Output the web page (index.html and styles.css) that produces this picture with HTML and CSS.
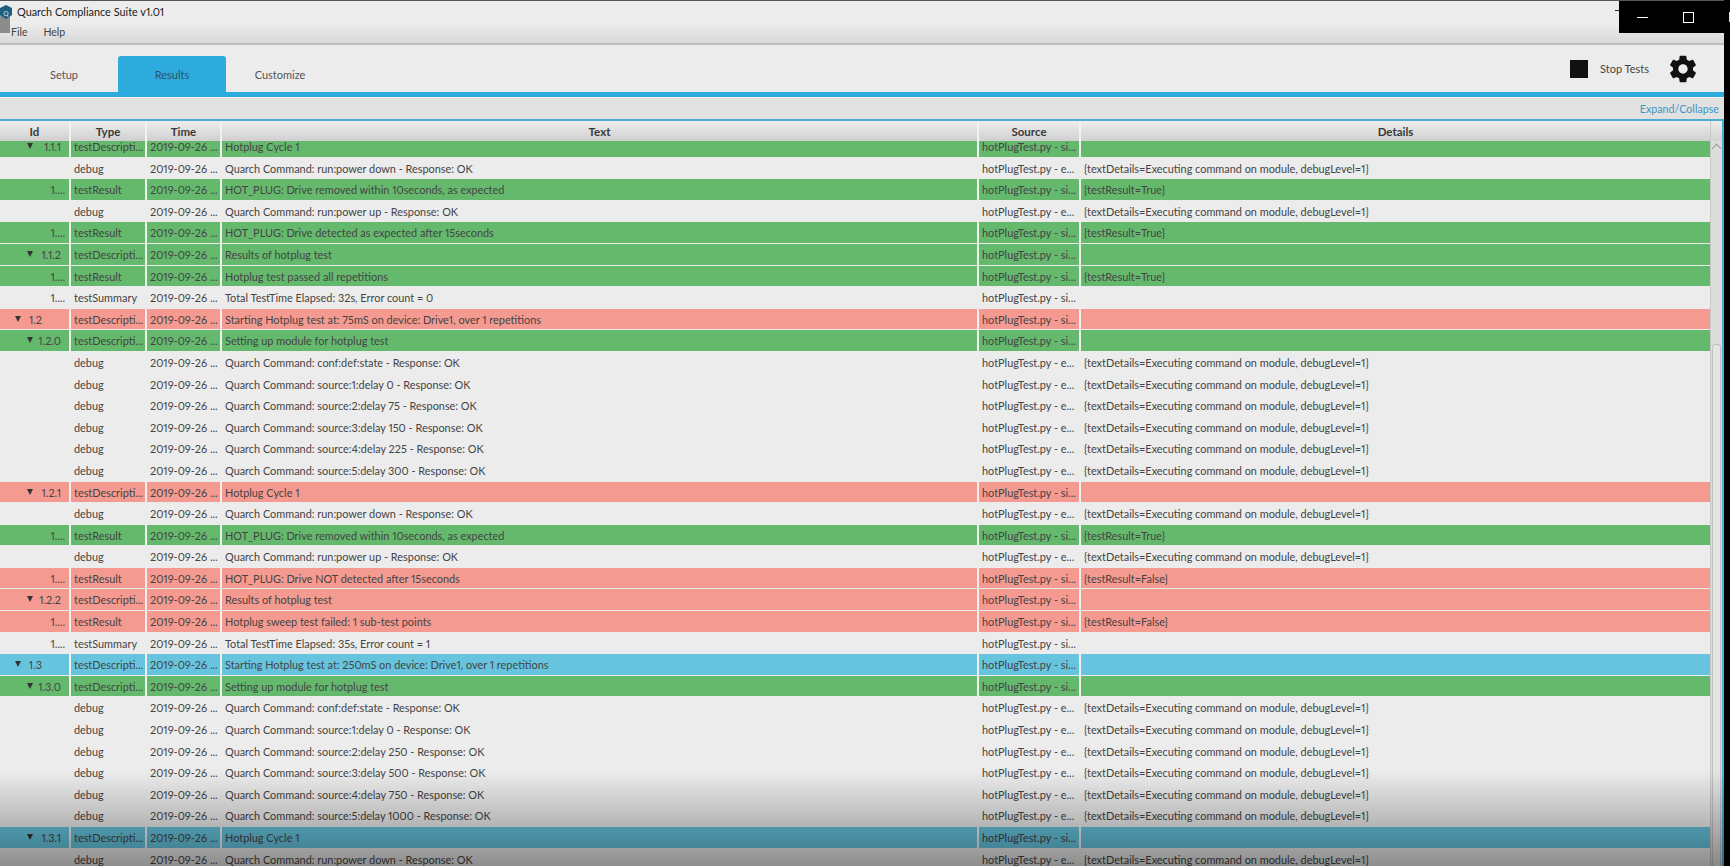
FILE: index.html
```html
<!DOCTYPE html>
<html lang="en">
<head>
<meta charset="utf-8">
<title>Quarch Compliance Suite v1.01</title>
<link rel="stylesheet" href="styles.css">
</head>
<body>
<div class="app">
  <div class="chrome">
    <div class="titlebar"><svg class="logo" viewBox="0 0 12 14"><path d="M6 0l6 3v7l-6 4-6-4V3z" fill="#1d5f80"/><text x="6" y="10.5" text-anchor="middle" class="logo-q">Q</text></svg><span>Quarch Compliance Suite v1.01</span></div>
    <div class="menubar"><span>File</span><span>Help</span></div>
  </div>
  <div class="toolbar">
    <div class="tabs">
      <div class="tab">Setup</div>
      <div class="tab active">Results</div>
      <div class="tab">Customize</div>
    </div>
    <div class="actions">
      <span class="stop-icon"></span>
      <span class="stop-label">Stop Tests</span>
      <svg class="gear" viewBox="0 0 24 24"><path fill="#111" d="M19.43 12.98c.04-.32.07-.64.07-.98s-.03-.66-.07-.98l2.11-1.65c.19-.15.24-.42.12-.64l-2-3.46c-.12-.22-.39-.3-.61-.22l-2.49 1c-.52-.4-1.08-.73-1.69-.98l-.38-2.65C14.46 2.18 14.25 2 14 2h-4c-.25 0-.46.18-.49.42l-.38 2.65c-.61.25-1.17.59-1.69.98l-2.49-1c-.23-.09-.49 0-.61.22l-2 3.46c-.13.22-.07.49.12.64l2.11 1.65c-.04.32-.07.65-.07.98s.03.66.07.98l-2.11 1.65c-.19.15-.24.42-.12.64l2 3.46c.12.22.39.3.61.22l2.49-1c.52.4 1.08.73 1.69.98l.38 2.65c.03.24.24.42.49.42h4c.25 0 .46-.18.49-.42l.38-2.65c.61-.25 1.17-.59 1.69-.98l2.49 1c.23.09.49 0 .61-.22l2-3.46c.12-.22.07-.49-.12-.64l-2.11-1.65zM12 15.5c-1.93 0-3.5-1.57-3.5-3.5s1.57-3.5 3.5-3.5 3.5 1.57 3.5 3.5-1.57 3.5-3.5 3.5z"/></svg>
    </div>
  </div>
  <div class="expandbar"><span>Expand/Collapse</span></div>
  <div class="grid">
    <div class="tablewrap">
      <div class="head">
        <div class="hc">Id</div><div class="hc">Type</div><div class="hc">Time</div><div class="hc">Text</div><div class="hc">Source</div><div class="hc">Details</div>
      </div>
      <div class="viewport">
        <table class="rows">
          <tbody>
<tr class="g"><td class="id l3"><i></i>1.1.1</td><td>testDescripti...</td><td>2019-09-26 ...</td><td>Hotplug Cycle 1</td><td>hotPlugTest.py - si...</td><td></td></tr>
<tr><td class="id"></td><td>debug</td><td>2019-09-26 ...</td><td>Quarch Command: run:power down - Response: OK</td><td>hotPlugTest.py - e...</td><td>{textDetails=Executing command on module, debugLevel=1}</td></tr>
<tr class="g"><td class="id">1....</td><td>testResult</td><td>2019-09-26 ...</td><td>HOT_PLUG: Drive removed within 10seconds, as expected</td><td>hotPlugTest.py - si...</td><td>{testResult=True}</td></tr>
<tr><td class="id"></td><td>debug</td><td>2019-09-26 ...</td><td>Quarch Command: run:power up - Response: OK</td><td>hotPlugTest.py - e...</td><td>{textDetails=Executing command on module, debugLevel=1}</td></tr>
<tr class="g"><td class="id">1....</td><td>testResult</td><td>2019-09-26 ...</td><td>HOT_PLUG: Drive detected as expected after 15seconds</td><td>hotPlugTest.py - si...</td><td>{testResult=True}</td></tr>
<tr class="g"><td class="id l3"><i></i>1.1.2</td><td>testDescripti...</td><td>2019-09-26 ...</td><td>Results of hotplug test</td><td>hotPlugTest.py - si...</td><td></td></tr>
<tr class="g"><td class="id">1....</td><td>testResult</td><td>2019-09-26 ...</td><td>Hotplug test passed all repetitions</td><td>hotPlugTest.py - si...</td><td>{testResult=True}</td></tr>
<tr><td class="id">1....</td><td>testSummary</td><td>2019-09-26 ...</td><td>Total TestTime Elapsed: 32s, Error count = 0</td><td>hotPlugTest.py - si...</td><td></td></tr>
<tr class="r"><td class="id l2"><i></i>1.2</td><td>testDescripti...</td><td>2019-09-26 ...</td><td>Starting Hotplug test at: 75mS on device: Drive1, over 1 repetitions</td><td>hotPlugTest.py - si...</td><td></td></tr>
<tr class="g"><td class="id l3"><i></i>1.2.0</td><td>testDescripti...</td><td>2019-09-26 ...</td><td>Setting up module for hotplug test</td><td>hotPlugTest.py - si...</td><td></td></tr>
<tr><td class="id"></td><td>debug</td><td>2019-09-26 ...</td><td>Quarch Command: conf:def:state - Response: OK</td><td>hotPlugTest.py - e...</td><td>{textDetails=Executing command on module, debugLevel=1}</td></tr>
<tr><td class="id"></td><td>debug</td><td>2019-09-26 ...</td><td>Quarch Command: source:1:delay 0 - Response: OK</td><td>hotPlugTest.py - e...</td><td>{textDetails=Executing command on module, debugLevel=1}</td></tr>
<tr><td class="id"></td><td>debug</td><td>2019-09-26 ...</td><td>Quarch Command: source:2:delay 75 - Response: OK</td><td>hotPlugTest.py - e...</td><td>{textDetails=Executing command on module, debugLevel=1}</td></tr>
<tr><td class="id"></td><td>debug</td><td>2019-09-26 ...</td><td>Quarch Command: source:3:delay 150 - Response: OK</td><td>hotPlugTest.py - e...</td><td>{textDetails=Executing command on module, debugLevel=1}</td></tr>
<tr><td class="id"></td><td>debug</td><td>2019-09-26 ...</td><td>Quarch Command: source:4:delay 225 - Response: OK</td><td>hotPlugTest.py - e...</td><td>{textDetails=Executing command on module, debugLevel=1}</td></tr>
<tr><td class="id"></td><td>debug</td><td>2019-09-26 ...</td><td>Quarch Command: source:5:delay 300 - Response: OK</td><td>hotPlugTest.py - e...</td><td>{textDetails=Executing command on module, debugLevel=1}</td></tr>
<tr class="r"><td class="id l3"><i></i>1.2.1</td><td>testDescripti...</td><td>2019-09-26 ...</td><td>Hotplug Cycle 1</td><td>hotPlugTest.py - si...</td><td></td></tr>
<tr><td class="id"></td><td>debug</td><td>2019-09-26 ...</td><td>Quarch Command: run:power down - Response: OK</td><td>hotPlugTest.py - e...</td><td>{textDetails=Executing command on module, debugLevel=1}</td></tr>
<tr class="g"><td class="id">1....</td><td>testResult</td><td>2019-09-26 ...</td><td>HOT_PLUG: Drive removed within 10seconds, as expected</td><td>hotPlugTest.py - si...</td><td>{testResult=True}</td></tr>
<tr><td class="id"></td><td>debug</td><td>2019-09-26 ...</td><td>Quarch Command: run:power up - Response: OK</td><td>hotPlugTest.py - e...</td><td>{textDetails=Executing command on module, debugLevel=1}</td></tr>
<tr class="r"><td class="id">1....</td><td>testResult</td><td>2019-09-26 ...</td><td>HOT_PLUG: Drive NOT detected after 15seconds</td><td>hotPlugTest.py - si...</td><td>{testResult=False}</td></tr>
<tr class="r"><td class="id l3"><i></i>1.2.2</td><td>testDescripti...</td><td>2019-09-26 ...</td><td>Results of hotplug test</td><td>hotPlugTest.py - si...</td><td></td></tr>
<tr class="r"><td class="id">1....</td><td>testResult</td><td>2019-09-26 ...</td><td>Hotplug sweep test failed: 1 sub-test points</td><td>hotPlugTest.py - si...</td><td>{testResult=False}</td></tr>
<tr><td class="id">1....</td><td>testSummary</td><td>2019-09-26 ...</td><td>Total TestTime Elapsed: 35s, Error count = 1</td><td>hotPlugTest.py - si...</td><td></td></tr>
<tr class="b"><td class="id l2"><i></i>1.3</td><td>testDescripti...</td><td>2019-09-26 ...</td><td>Starting Hotplug test at: 250mS on device: Drive1, over 1 repetitions</td><td>hotPlugTest.py - si...</td><td></td></tr>
<tr class="g"><td class="id l3"><i></i>1.3.0</td><td>testDescripti...</td><td>2019-09-26 ...</td><td>Setting up module for hotplug test</td><td>hotPlugTest.py - si...</td><td></td></tr>
<tr><td class="id"></td><td>debug</td><td>2019-09-26 ...</td><td>Quarch Command: conf:def:state - Response: OK</td><td>hotPlugTest.py - e...</td><td>{textDetails=Executing command on module, debugLevel=1}</td></tr>
<tr><td class="id"></td><td>debug</td><td>2019-09-26 ...</td><td>Quarch Command: source:1:delay 0 - Response: OK</td><td>hotPlugTest.py - e...</td><td>{textDetails=Executing command on module, debugLevel=1}</td></tr>
<tr><td class="id"></td><td>debug</td><td>2019-09-26 ...</td><td>Quarch Command: source:2:delay 250 - Response: OK</td><td>hotPlugTest.py - e...</td><td>{textDetails=Executing command on module, debugLevel=1}</td></tr>
<tr><td class="id"></td><td>debug</td><td>2019-09-26 ...</td><td>Quarch Command: source:3:delay 500 - Response: OK</td><td>hotPlugTest.py - e...</td><td>{textDetails=Executing command on module, debugLevel=1}</td></tr>
<tr><td class="id"></td><td>debug</td><td>2019-09-26 ...</td><td>Quarch Command: source:4:delay 750 - Response: OK</td><td>hotPlugTest.py - e...</td><td>{textDetails=Executing command on module, debugLevel=1}</td></tr>
<tr><td class="id"></td><td>debug</td><td>2019-09-26 ...</td><td>Quarch Command: source:5:delay 1000 - Response: OK</td><td>hotPlugTest.py - e...</td><td>{textDetails=Executing command on module, debugLevel=1}</td></tr>
<tr class="b"><td class="id l3"><i></i>1.3.1</td><td>testDescripti...</td><td>2019-09-26 ...</td><td>Hotplug Cycle 1</td><td>hotPlugTest.py - si...</td><td></td></tr>
<tr><td class="id"></td><td>debug</td><td>2019-09-26 ...</td><td>Quarch Command: run:power down - Response: OK</td><td>hotPlugTest.py - e...</td><td>{textDetails=Executing command on module, debugLevel=1}</td></tr>
          </tbody>
        </table>
      </div>
    </div>
    <div class="scrollbar">
      <div class="sb-head"></div>
      <div class="sb-arrow"></div>
      <div class="sb-thumb"></div>
    </div>
  </div>
</div>
<div class="right-edge"></div>
<div class="winbtns">
  <span class="win-stub"></span>
  <span class="win-min"></span>
  <span class="win-max"></span>
  <span class="win-close"></span>
</div>
<div class="shade"></div>
</body>
</html>
```

FILE: styles.css
```css
* { box-sizing: border-box; }
html, body { margin: 0; height: 100%; }
body {
  display: flex;
  height: 866px;
  overflow: hidden;
  background: #000;
  font-family: Lato, Roboto, sans-serif;
  font-size: 10.9px;
  font-variant-numeric: proportional-nums;
  color: #444;
  position: relative;
}
.app {
  width: 1724px;
  height: 866px;
  display: flex;
  flex-direction: column;
  background: #ececec;
  overflow: hidden;
  flex: none;
}
.right-edge { flex: 1; background: #000; }

.chrome {
  height: 45px;
  flex: none;
  border-top: 1px solid #555;
  border-bottom: 2px solid #bdbdbd;
  background: linear-gradient(#ececec 0, #ececec 22px, #d9d9d9 42px);
  position: relative;
}
.chrome::before {
  content: "";
  position: absolute;
  left: 0;
  top: 8px;
  width: 10px;
  height: 24px;
  background: #8c8c8c;
}
.titlebar {
  height: 21px;
  display: flex;
  align-items: center;
  padding-left: 17px;
  color: #222;
  font-size: 10.9px;
  position: relative;
}
.logo { position: absolute; left: 0; top: 4px; width: 12px; height: 14px; }
.logo-q { font-size: 8px; fill: #cfe3ee; font-family: Roboto, sans-serif; }
.menubar {
  height: 20px;
  display: flex;
  align-items: center;
  gap: 16px;
  padding-left: 11px;
  font-size: 10.5px;
  color: #444;
  position: relative;
}

.toolbar {
  height: 52px;
  flex: none;
  display: flex;
  justify-content: space-between;
  align-items: stretch;
  background: #ececec;
  border-bottom: 5px solid #2eabdd;
}
.tabs { display: flex; align-items: flex-end; padding-left: 10px; }
.tab {
  width: 108px;
  height: 36px;
  display: flex;
  align-items: center;
  justify-content: center;
  font-size: 11px;
  color: #555;
  border-radius: 3px 3px 0 0;
}
.tab.active { background: #2eabdd; color: #28536a; }
.actions { display: flex; align-items: center; padding-right: 25px; }
.stop-icon { width: 18px; height: 18px; background: #111; margin-right: 12px; }
.stop-label { font-size: 11px; color: #444; margin-right: 18px; }
.gear { width: 32px; height: 32px; }

.expandbar {
  height: 22px;
  flex: none;
  display: flex;
  align-items: center;
  justify-content: flex-end;
  padding-right: 5px;
  background: #e1e1e1;
  border-top: 1px solid #f4f4f4;
  color: #3d97c4;
  font-size: 10.7px;
}

.grid {
  flex: 1;
  min-height: 0;
  display: flex;
  border-top: 2px solid #4eaed2;
  border-right: 2px solid #4eaed2;
  background: #ececec;
}
.tablewrap { width: 1710px; flex: none; display: flex; flex-direction: column; min-height: 0; }
.head, .rows tr {
  display: grid;
  grid-template-columns: 71px 76px 75px 757px 102px 629px;
}
.head {
  height: 20px;
  flex: none;
  background: linear-gradient(#eeeeee, #d0d0d0);
}
.hc {
  display: flex;
  align-items: center;
  justify-content: center;
  font-weight: 700;
  font-size: 11.5px;
  color: #3a3a3a;
  border-right: 2px solid #f2f2f2;
}
.hc:last-child { border-right: 0; }

.viewport { flex: 1; min-height: 0; overflow: hidden; }
.rows, .rows tbody { display: block; width: 1710px; }
.rows { margin-top: -5px; }
.rows tr { height: 21.6px; }
.rows td {
  display: block;
  padding: 0 0 0 3px;
  white-space: nowrap;
  border-right: 2px solid transparent;
  line-height: 21.4px;
  height: 20.6px;
  min-width: 0;
}
.rows td:last-child { border-right: 0; }
.rows td.id { text-align: right; padding: 0 4px 0 0; position: relative; }
.rows td.l3 { padding-right: 8px; }
.rows td.l2 { padding-right: 27px; }
.rows td.id i {
  position: absolute;
  top: 7px;
  width: 0;
  height: 0;
  border-left: 3.5px solid transparent;
  border-right: 3.5px solid transparent;
  border-top: 6px solid #333;
}
.rows td.l3 i { left: 27px; }
.rows td.l2 i { left: 15px; }
.rows tr.g td, .rows tr.r td, .rows tr.b td { border-right-color: #f0f0f0; }
.rows tr.g td:last-child, .rows tr.r td:last-child, .rows tr.b td:last-child { border-right: 0; }
.rows tr.g td { background: #65b96d; }
.rows tr.r td { background: #f59a90; }
.rows tr.b td { background: #66c4df; }

.scrollbar {
  flex: 1;
  position: relative;
  background: #dcdcdc;
  border-left: 1px solid #c8c8c8;
}
.sb-head { height: 20px; background: linear-gradient(#ececec, #d2d2d2); }
.sb-arrow {
  width: 7px;
  height: 7px;
  margin: 4px auto 0;
  transform: rotate(45deg);
  border-left: 1px solid #999;
  border-top: 1px solid #999;
}
.sb-thumb {
  position: absolute;
  left: 1px;
  right: 1px;
  top: 223px;
  height: 600px;
  background: #e4e4e4;
  border: 1px solid #c0c0c0;
  border-radius: 3px;
}

.winbtns {
  position: absolute;
  left: 1619px;
  top: 1px;
  width: 111px;
  height: 32px;
  background: #000;
}
.win-stub { position: absolute; left: -4px; top: 9px; width: 4px; height: 1px; background: #222; }
.win-min { position: absolute; left: 18px; top: 16px; width: 11px; height: 1px; background: #fff; }
.win-max { position: absolute; left: 64px; top: 11px; width: 11px; height: 11px; border: 1px solid #fff; }
.win-close { position: absolute; right: 0; top: 11px; width: 1px; height: 10px; background: #ddd; }

.shade {
  position: absolute;
  left: 0;
  right: 0;
  top: 770px;
  bottom: 0;
  background: linear-gradient(rgba(0,0,0,0), rgba(0,0,0,.4));
  pointer-events: none;
}
```
